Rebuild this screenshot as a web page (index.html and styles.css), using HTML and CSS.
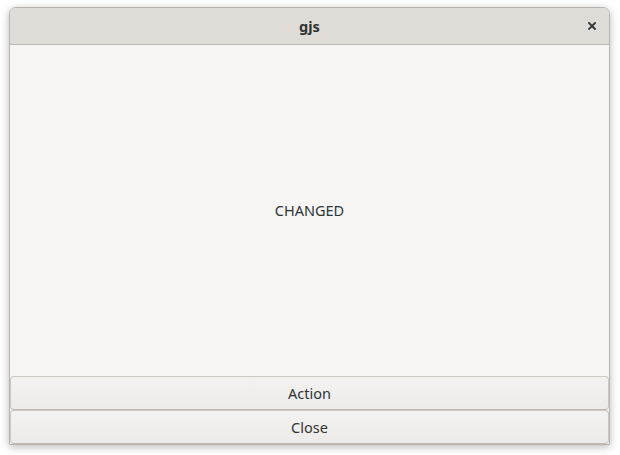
FILE: index.html
```html
<!DOCTYPE html>
<html>
<head>
<meta charset="utf-8">
<link rel="stylesheet" href="styles.css">
</head>
<body>
<div class="window">
  <div class="header">
    <span class="title">gjs</span>
    <button class="close-x" aria-label="Close">
      <svg width="8" height="8" viewBox="0 0 8 8"><path d="M1 1 L7 7 M7 1 L1 7" stroke="#2e3436" stroke-width="1.8" stroke-linecap="square"/></svg>
    </button>
  </div>
  <div class="content">
    <span class="label">CHANGED</span>
  </div>
  <button class="btn">Action</button>
  <button class="btn">Close</button>
</div>
</body>
</html>
```
FILE: styles.css
```css
html, body {
  margin: 0;
  background: #ffffff;
}
body {
  padding: 7px 10px 10px 9px;
  font-family: "Noto Sans", "Open Sans", sans-serif;
  font-size: 14.5px;
  color: #2e3436;
}
.window {
  width: 601px;
  height: 438px;
  box-sizing: border-box;
  display: flex;
  flex-direction: column;
  border: 1px solid #b9b4ae;
  border-radius: 7px 7px 0 0;
  background: #f6f5f4;
  box-shadow: 0 2px 8px rgba(0,0,0,0.28);
  overflow: hidden;
}
.header {
  height: 36px;
  flex: none;
  display: flex;
  align-items: center;
  justify-content: center;
  position: relative;
  background: #dfdcd8;
  border-bottom: 1px solid #bfb8b1;
}
.title {
  font-weight: bold;
  font-size: 14.5px;
}
.close-x {
  position: absolute;
  right: 13px;
  top: 14px;
  width: 8px;
  height: 8px;
  padding: 0;
  border: 0;
  background: transparent;
  display: flex;
}
.content {
  flex: 1;
  display: flex;
  align-items: center;
  justify-content: center;
  padding-bottom: 1px;
}
.btn {
  height: 34px;
  flex: none;
  margin: 0;
  font: inherit;
  color: #2e3436;
  border: 1px solid #cdc7c2;
  border-bottom-color: #bfb8b1;
  border-radius: 4px;
  background: linear-gradient(#f4f2f1, #edebe9);
}
```
